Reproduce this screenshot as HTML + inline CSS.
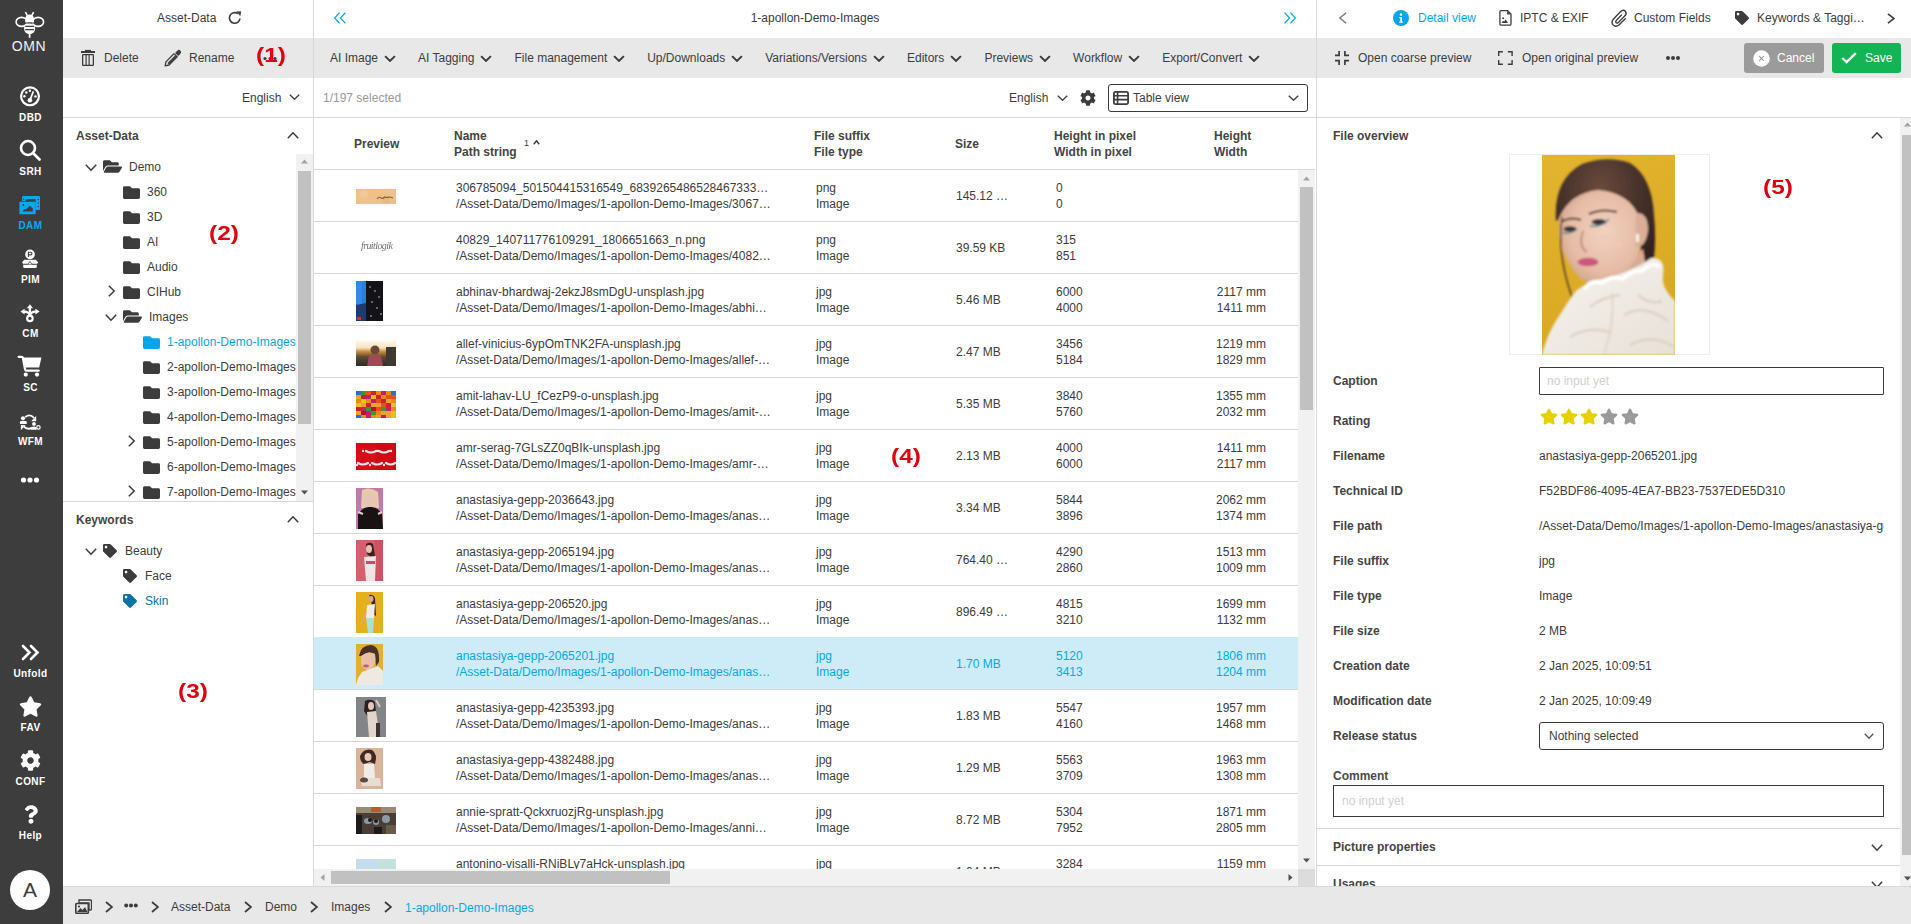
<!DOCTYPE html>
<html><head><meta charset="utf-8">
<style>
*{box-sizing:border-box;margin:0;padding:0}
html,body{width:1911px;height:924px;overflow:hidden;background:#fff;font-family:"Liberation Sans",sans-serif;font-size:12px;color:#3c3c3c}
.a{position:absolute}
.t{position:absolute;white-space:nowrap;line-height:16px}
.b{font-weight:bold;color:#444}
svg{display:block}
#nav{left:0;top:0;width:63px;height:924px;background:#3d3d3d}
.nl{position:absolute;left:0;width:61px;text-align:center;color:#fff;font-weight:bold;font-size:10px;line-height:13px;letter-spacing:0.4px}
.gray{background:#e8e8e8}
.hl{position:absolute;height:1px;background:#d8d8d8}
.vl{position:absolute;width:1px;background:#d8d8d8}
.red{color:#e0000e;font-weight:bold;font-size:20px;line-height:22px;transform:scaleX(1.22);transform-origin:0 0}
.blue{color:#06a7e8}
</style></head><body>
<!-- NAV -->
<div id="nav" class="a">
 <svg class="a" style="left:0;top:0" width="63" height="40" viewBox="0 0 63 40">
  <g fill="none" stroke="#fff" stroke-width="1.6">
   <ellipse cx="21.6" cy="21.9" rx="5.5" ry="4.5"/>
   <ellipse cx="38.1" cy="21.9" rx="5.5" ry="4.5"/>
   <path d="M25.4 12.2 L27.3 15.6 M33.6 12.2 L31.7 15.6"/>
  </g>
  <path d="M25.2 19.5 Q25.2 14.6 29.6 14.6 Q34 14.6 34 19.5 L34 22.6 L25.2 22.6z" fill="#fff"/>
  <ellipse cx="29.6" cy="28.6" rx="5.6" ry="5.6" fill="#fff"/>
  <path d="M24 23 H35.3" stroke="#3d3d3d" stroke-width="0.9"/>
  <path d="M25.2 26.4 H34 M25.2 29.6 H34" stroke="#3d3d3d" stroke-width="1.1"/>
  <path d="M29.6 33 V37.8" stroke="#fff" stroke-width="1.7"/>
 </svg>
 <div class="a" style="left:0;top:38px;width:58px;text-align:center;color:#f2f2f2;font-size:14px;line-height:16px;letter-spacing:0.6px">OMN</div>

 <svg class="a" style="left:19px;top:85px" width="23" height="23" viewBox="0 0 23 23">
  <circle cx="11" cy="11.3" r="8.95" fill="none" stroke="#fff" stroke-width="2.2"/>
  <circle cx="10.9" cy="15.2" r="2.3" fill="#fff"/>
  <path d="M10.9 15.2 L14.4 6.4" stroke="#fff" stroke-width="1.7"/>
  <circle cx="5.4" cy="11.3" r="1.2" fill="#fff"/><circle cx="7.3" cy="7.5" r="1.2" fill="#fff"/>
  <circle cx="10.9" cy="5.7" r="1.2" fill="#fff"/><circle cx="16.5" cy="11.4" r="1.2" fill="#fff"/>
 </svg>
 <div class="nl" style="top:111px">DBD</div>

 <svg class="a" style="left:19px;top:139px" width="23" height="23" viewBox="0 0 23 23">
  <circle cx="9" cy="9" r="7" fill="none" stroke="#fff" stroke-width="2.6"/>
  <path d="M14 14 L20.5 20.5" stroke="#fff" stroke-width="2.8" stroke-linecap="round"/>
 </svg>
 <div class="nl" style="top:165px">SRH</div>

 <svg class="a" style="left:0;top:190px" width="63" height="30" viewBox="0 190 63 30">
  <path d="M23.2 196 H38.8 A1.2 1.2 0 0 1 40 197.2 V208.8 A1.2 1.2 0 0 1 38.8 210 H35.6 V199.2 H25.5 V201 H22.1 V197.2 A1.2 1.2 0 0 1 23.2 196z" fill="#0aa9ee"/>
  <circle cx="23.7" cy="199.3" r="0.75" fill="#3d3d3d"/>
  <circle cx="38.3" cy="199.6" r="0.75" fill="#3d3d3d"/><circle cx="38.3" cy="203.1" r="0.75" fill="#3d3d3d"/><circle cx="38.3" cy="206.6" r="0.75" fill="#3d3d3d"/>
  <rect x="19.4" y="201.8" width="16.2" height="12.4" rx="0.6" fill="#0aa9ee"/>
  <path d="M22.4 211.5 L24.4 209.1 L25.4 209.8 L29.9 205.8 L32.8 208.5 V211.5z" fill="#3d3d3d"/>
  <circle cx="23.3" cy="205.1" r="1" fill="#3d3d3d"/>
 </svg>
 <div class="nl blue" style="top:219px;color:#0aa9ee">DAM</div>

 <svg class="a" style="left:0;top:245px" width="63" height="28" viewBox="0 245 63 28">
  <circle cx="30" cy="254.4" r="4.85" fill="#fff"/>
  <path d="M28.4 257 V252.2 H30.6 A1.35 1.35 0 0 1 30.6 254.9 H28.4" fill="none" stroke="#3d3d3d" stroke-width="1.1"/>
  <path d="M22 262.4 L24.2 259.8 H35.8 L38.2 262.4 L36.8 264 H23.4z" fill="#fff"/>
  <path d="M23.2 264.4 H36.8 V266.8 Q36.8 268.1 35.5 268.1 H24.5 Q23.2 268.1 23.2 266.8z" fill="#fff"/>
  <path d="M23.4 264.2 H28.2 L30 261.4 L31.8 264.2 H36.6" fill="none" stroke="#3d3d3d" stroke-width="0.8"/>
 </svg>
 <div class="nl" style="top:273px">PIM</div>

 <svg class="a" style="left:0;top:300px" width="63" height="26" viewBox="0 300 63 26">
  <circle cx="29.9" cy="318.4" r="2.75" fill="none" stroke="#fff" stroke-width="2.1"/>
  <path d="M29.9 315.6 V307.5" stroke="#fff" stroke-width="2.3"/>
  <path d="M29.9 315.6 Q29 311.6 24 311.6 M29.9 315.6 Q30.8 311.6 35.8 311.6" fill="none" stroke="#fff" stroke-width="2.2"/>
  <path d="M29.9 304.2 L33 308.2 H26.8z M20.4 311.6 L24.6 308.8 V314.4z M39.6 311.6 L35.4 308.8 V314.4z" fill="#fff"/>
 </svg>
 <div class="nl" style="top:327px">CM</div>

 <svg class="a" style="left:0;top:350px" width="63" height="30" viewBox="0 350 63 30">
  <path d="M18.6 356.8 H21.6 Q22.6 356.8 22.9 357.8 L25 369.2 Q25.3 370.6 26.6 370.6 H38.8" fill="none" stroke="#fff" stroke-width="2.2" stroke-linecap="round" stroke-linejoin="round"/>
  <path d="M23.2 357.6 H41.4 L39.2 367.4 H25z" fill="#fff"/>
  <circle cx="25.8" cy="374.6" r="2.1" fill="#fff"/><circle cx="37" cy="374.6" r="2.1" fill="#fff"/>
 </svg>
 <div class="nl" style="top:381px">SC</div>

 <svg class="a" style="left:0;top:409.5px" width="63" height="24" viewBox="0 408 63 24">
  <circle cx="23" cy="416.3" r="2.1" fill="#fff"/>
  <rect x="19.9" y="418.9" width="6.9" height="3.2" rx="1.2" fill="#fff"/>
  <path d="M25.3 415 Q30 411.4 34 415.8" fill="none" stroke="#fff" stroke-width="1.9"/>
  <path d="M36.2 413.8 V419.3 H31.2z" fill="#fff"/>
  <path d="M23.2 423.8 Q27.5 428.6 32 425.6" fill="none" stroke="#fff" stroke-width="1.9"/>
  <path d="M20.9 422.9 V427.9 L25.6 423.2z" fill="#fff"/>
  <circle cx="34" cy="421.9" r="1.9" fill="#fff"/>
  <path d="M30.9 427.8 Q30.9 424.4 33.8 424.4 Q36.7 424.4 36.7 427.8z" fill="#fff"/>
  <circle cx="38.4" cy="425.4" r="1.75" fill="none" stroke="#fff" stroke-width="1.2"/>
 </svg>
 <div class="nl" style="top:435px">WFM</div>

 <svg class="a" style="left:20px;top:476px" width="20" height="8" viewBox="0 0 20 8">
  <circle cx="3.5" cy="4" r="2.6" fill="#fff"/><circle cx="10" cy="4" r="2.6" fill="#fff"/><circle cx="16.5" cy="4" r="2.6" fill="#fff"/>
 </svg>

 <svg class="a" style="left:21px;top:644px" width="19" height="17" viewBox="0 0 19 17">
  <path d="M2 2 L8.5 8.5 L2 15 M10 2 L16.5 8.5 L10 15" stroke="#fff" stroke-width="2.6" fill="none" stroke-linecap="round"/>
 </svg>
 <div class="nl" style="top:667px">Unfold</div>

 <svg class="a" style="left:19px;top:696px" width="23" height="21" viewBox="0 0 576 512">
  <path fill="#fff" d="M259.3 17.8L194 150.2 47.9 171.5c-26.2 3.8-36.7 36.1-17.7 54.6l105.7 103-25 145.5c-4.5 26.3 23.2 46 46.4 33.7L288 439.6l130.7 68.7c23.2 12.2 50.9-7.4 46.4-33.7l-25-145.5 105.7-103c19-18.5 8.5-50.8-17.7-54.6L382 150.2 316.7 17.8c-11.7-23.6-45.6-23.9-57.4 0z"/>
 </svg>
 <div class="nl" style="top:721px">FAV</div>

 <svg class="a" style="left:20px;top:750px" width="21" height="21" viewBox="0 0 512 512">
  <path fill="#fff" d="M487.4 315.7l-42.6-24.6c4.3-23.2 4.3-47 0-70.2l42.6-24.6c4.9-2.8 7.100-8.6 5.5-14-11.1-35.6-30-67.8-54.7-94.6-3.8-4.1-10-5.1-14.8-2.3L380.8 110c-17.9-15.4-38.5-27.3-60.8-35.1V25.8c0-5.6-3.9-10.5-9.4-11.7-36.7-8.2-74.3-7.8-109.2 0-5.5 1.2-9.4 6.1-9.4 11.7V75c-22.2 7.9-42.8 19.8-60.8 35.1L88.7 85.5c-4.9-2.8-11-1.9-14.8 2.3-24.7 26.7-43.6 58.9-54.7 94.6-1.7 5.4.6 11.2 5.5 14L67.3 221c-4.3 23.2-4.3 47 0 70.2l-42.6 24.6c-4.9 2.8-7.100 8.6-5.5 14 11.1 35.6 30 67.8 54.7 94.6 3.8 4.1 10 5.1 14.8 2.3l42.6-24.6c17.9 15.4 38.5 27.3 60.8 35.1v49.2c0 5.6 3.9 10.5 9.4 11.700 36.7 8.2 74.3 7.8 109.2 0 5.5-1.2 9.4-6.1 9.4-11.7v-49.2c22.2-7.9 42.8-19.8 60.8-35.1l42.6 24.6c4.9 2.8 11 1.9 14.8-2.3 24.7-26.7 43.6-58.9 54.7-94.6 1.5-5.5-.7-11.3-5.6-14.1zM256 336c-44.1 0-80-35.9-80-80s35.9-80 80-80 80 35.9 80 80-35.9 80-80 80z"/>
 </svg>
 <div class="nl" style="top:775px">CONF</div>

 <svg class="a" style="left:24px;top:805px" width="14" height="19" viewBox="0 0 384 512">
  <path fill="#fff" d="M202.021 0C122.202 0 70.503 32.703 29.914 91.026c-7.363 10.58-5.093 25.086 5.178 32.874l43.138 32.709c10.373 7.865 25.132 6.026 33.253-4.148 25.049-31.381 43.63-49.449 82.757-49.449 30.764 0 68.816 19.799 68.816 49.631 0 22.552-18.617 34.134-48.993 51.164-35.423 19.86-82.299 44.576-82.299 106.405V320c0 13.255 10.745 24 24 24h72.471c13.255 0 24-10.745 24-24v-5.773c0-42.86 125.268-44.645 125.268-160.627C377.504 66.256 286.902 0 202.021 0zM192 373.459c-38.196 0-69.271 31.075-69.271 69.271 0 38.195 31.075 69.27 69.271 69.27s69.271-31.075 69.271-69.271-31.075-69.27-69.271-69.27z"/>
 </svg>
 <div class="nl" style="top:829px">Help</div>

 <div class="a" style="left:10px;top:870px;width:40px;height:40px;border-radius:50%;background:#fff;color:#3c3c3c;text-align:center;font-size:21px;line-height:40px">A</div>
</div>
<!-- PANEL 1 -->
<div id="p1" class="a" style="left:63px;top:0;width:250px;height:886px">
<div class="t" style="left:94px;top:10px">Asset-Data</div>
<svg class="a" style="left:164px;top:10px" width="16" height="16" viewBox="0 0 16 16"><path d="M13 8.5 A5.3 5.3 0 1 1 10.8 3.6" fill="none" stroke="#3c3c3c" stroke-width="1.6"/><path d="M9.3 1.2 L14.2 1.5 L13.3 6.2z" fill="#3c3c3c"/></svg>
<div class="a gray" style="left:0;top:38px;width:250px;height:40px"></div>
<svg class="a" style="left:18px;top:49px" width="14" height="17" viewBox="0 0 14 17"><rect x="4" y="0.9" width="6" height="1.3" fill="#3c3c3c"/><rect x="0" y="2" width="14" height="2" fill="#3c3c3c"/><rect x="1.65" y="5.65" width="10.7" height="10.7" rx="0.6" fill="none" stroke="#3c3c3c" stroke-width="1.3"/><rect x="4.5" y="6" width="1.2" height="10" fill="#3c3c3c"/><rect x="7.5" y="6" width="1.2" height="10" fill="#3c3c3c"/></svg>
<div class="t" style="left:41px;top:50px">Delete</div>
<svg class="a" style="left:99px;top:47px" width="22" height="22" viewBox="0 0 22 22"><path d="M12.0 6.6 L15.2 9.8 L7.0 18.0 L3.2 18.9 L3.9 14.9 Z" fill="none" stroke="#3c3c3c" stroke-width="1.3" stroke-linejoin="round"/><path d="M14.2 8.8 L6.2 16.8" stroke="#3c3c3c" stroke-width="2"/><path d="M15.2 6.9 L16.9 5.2" stroke="#3c3c3c" stroke-width="4.4" stroke-linecap="round"/><path d="M12.6 5.9 L15.9 9.2" stroke="#e8e8e8" stroke-width="0.9"/></svg>
<div class="t" style="left:126px;top:50px">Rename</div>
<svg class="a" style="left:200px;top:56px" width="14" height="5" viewBox="0 0 14 5"><circle cx="2" cy="2.5" r="1.6" fill="#3c3c3c"/><circle cx="7" cy="2.5" r="1.6" fill="#3c3c3c"/><circle cx="12" cy="2.5" r="1.6" fill="#3c3c3c"/></svg>
<div class="a red" style="left:193px;top:43.5px">(1)</div>
<div class="t" style="left:179px;top:90px">English</div>
<svg class="a" style="left:226px;top:94px" width="11" height="6" viewBox="0 0 11 6"><path d="M0.8 0.8 L5.5 5.2 L10.2 0.8" fill="none" stroke="#3c3c3c" stroke-width="1.3"/></svg>
<div class="hl" style="left:0;top:117px;width:250px"></div>
<div class="t b" style="left:13px;top:128px">Asset-Data</div>
<svg class="a" style="left:224px;top:132px" width="12" height="7" viewBox="0 0 12 7"><path d="M0.8 6.2 L6.0 0.8 L11.2 6.2" fill="none" stroke="#3c3c3c" stroke-width="1.5"/></svg>
<div class="a" style="left:0;top:154px;width:233px;height:347px;overflow:hidden"><svg class="a" style="left:22px;top:10px" width="12" height="7" viewBox="0 0 12 7"><path d="M0.8 0.8 L6.0 6.2 L11.2 0.8" fill="none" stroke="#3c3c3c" stroke-width="1.5"/></svg><svg class="a" style="left:40px;top:5px" width="19" height="15" viewBox="0 56 576 400" fill="#3c3c3c"><path d="M572.694 292.093L500.27 416.248A63.997 63.997 0 0 1 444.989 448H45.025c-18.523 0-30.064-20.093-20.731-36.093l72.424-124.155A64 64 0 0 1 152 256h399.964c18.523 0 30.064 20.093 20.73 36.093zM152 224h328v-48c0-26.51-21.49-48-48-48H272l-64-64H48C21.49 64 0 85.49 0 112v278.046l69.077-118.418C86.214 242.25 117.989 224 152 224z"/></svg><div class="t" style="left:66px;top:5px">Demo</div><svg class="a" style="left:60px;top:31px" width="17" height="15" viewBox="0 48 512 416" fill="#3c3c3c"><path d="M464 128H272l-64-64H48C21.49 64 0 85.49 0 112v288c0 26.51 21.49 48 48 48h416c26.51 0 48-21.49 48-48V176c0-26.51-21.49-48-48-48z"/></svg><div class="t" style="left:84px;top:30px">360</div><svg class="a" style="left:60px;top:56px" width="17" height="15" viewBox="0 48 512 416" fill="#3c3c3c"><path d="M464 128H272l-64-64H48C21.49 64 0 85.49 0 112v288c0 26.51 21.49 48 48 48h416c26.51 0 48-21.49 48-48V176c0-26.51-21.49-48-48-48z"/></svg><div class="t" style="left:84px;top:55px">3D</div><svg class="a" style="left:60px;top:81px" width="17" height="15" viewBox="0 48 512 416" fill="#3c3c3c"><path d="M464 128H272l-64-64H48C21.49 64 0 85.49 0 112v288c0 26.51 21.49 48 48 48h416c26.51 0 48-21.49 48-48V176c0-26.51-21.49-48-48-48z"/></svg><div class="t" style="left:84px;top:80px">AI</div><svg class="a" style="left:60px;top:106px" width="17" height="15" viewBox="0 48 512 416" fill="#3c3c3c"><path d="M464 128H272l-64-64H48C21.49 64 0 85.49 0 112v288c0 26.51 21.49 48 48 48h416c26.51 0 48-21.49 48-48V176c0-26.51-21.49-48-48-48z"/></svg><div class="t" style="left:84px;top:105px">Audio</div><svg class="a" style="left:45px;top:131px" width="7" height="12" viewBox="0 0 7 12"><path d="M0.8 0.8 L6.2 6.0 L0.8 11.2" fill="none" stroke="#3c3c3c" stroke-width="1.5"/></svg><svg class="a" style="left:60px;top:131px" width="17" height="15" viewBox="0 48 512 416" fill="#3c3c3c"><path d="M464 128H272l-64-64H48C21.49 64 0 85.49 0 112v288c0 26.51 21.49 48 48 48h416c26.51 0 48-21.49 48-48V176c0-26.51-21.49-48-48-48z"/></svg><div class="t" style="left:84px;top:130px">CIHub</div><svg class="a" style="left:42px;top:160px" width="12" height="7" viewBox="0 0 12 7"><path d="M0.8 0.8 L6.0 6.2 L11.2 0.8" fill="none" stroke="#3c3c3c" stroke-width="1.5"/></svg><svg class="a" style="left:60px;top:155px" width="19" height="15" viewBox="0 56 576 400" fill="#3c3c3c"><path d="M572.694 292.093L500.27 416.248A63.997 63.997 0 0 1 444.989 448H45.025c-18.523 0-30.064-20.093-20.731-36.093l72.424-124.155A64 64 0 0 1 152 256h399.964c18.523 0 30.064 20.093 20.73 36.093zM152 224h328v-48c0-26.51-21.49-48-48-48H272l-64-64H48C21.49 64 0 85.49 0 112v278.046l69.077-118.418C86.214 242.25 117.989 224 152 224z"/></svg><div class="t" style="left:86px;top:155px">Images</div><svg class="a" style="left:80px;top:181px" width="17" height="15" viewBox="0 48 512 416" fill="#06a7e8"><path d="M464 128H272l-64-64H48C21.49 64 0 85.49 0 112v288c0 26.51 21.49 48 48 48h416c26.51 0 48-21.49 48-48V176c0-26.51-21.49-48-48-48z"/></svg><div class="t" style="left:104px;top:180px;color:#06a7e8">1-apollon-Demo-Images</div><svg class="a" style="left:80px;top:206px" width="17" height="15" viewBox="0 48 512 416" fill="#3c3c3c"><path d="M464 128H272l-64-64H48C21.49 64 0 85.49 0 112v288c0 26.51 21.49 48 48 48h416c26.51 0 48-21.49 48-48V176c0-26.51-21.49-48-48-48z"/></svg><div class="t" style="left:104px;top:205px">2-apollon-Demo-Images</div><svg class="a" style="left:80px;top:231px" width="17" height="15" viewBox="0 48 512 416" fill="#3c3c3c"><path d="M464 128H272l-64-64H48C21.49 64 0 85.49 0 112v288c0 26.51 21.49 48 48 48h416c26.51 0 48-21.49 48-48V176c0-26.51-21.49-48-48-48z"/></svg><div class="t" style="left:104px;top:230px">3-apollon-Demo-Images</div><svg class="a" style="left:80px;top:256px" width="17" height="15" viewBox="0 48 512 416" fill="#3c3c3c"><path d="M464 128H272l-64-64H48C21.49 64 0 85.49 0 112v288c0 26.51 21.49 48 48 48h416c26.51 0 48-21.49 48-48V176c0-26.51-21.49-48-48-48z"/></svg><div class="t" style="left:104px;top:255px">4-apollon-Demo-Images</div><svg class="a" style="left:65px;top:281px" width="7" height="12" viewBox="0 0 7 12"><path d="M0.8 0.8 L6.2 6.0 L0.8 11.2" fill="none" stroke="#3c3c3c" stroke-width="1.5"/></svg><svg class="a" style="left:80px;top:281px" width="17" height="15" viewBox="0 48 512 416" fill="#3c3c3c"><path d="M464 128H272l-64-64H48C21.49 64 0 85.49 0 112v288c0 26.51 21.49 48 48 48h416c26.51 0 48-21.49 48-48V176c0-26.51-21.49-48-48-48z"/></svg><div class="t" style="left:104px;top:280px">5-apollon-Demo-Images</div><svg class="a" style="left:80px;top:306px" width="17" height="15" viewBox="0 48 512 416" fill="#3c3c3c"><path d="M464 128H272l-64-64H48C21.49 64 0 85.49 0 112v288c0 26.51 21.49 48 48 48h416c26.51 0 48-21.49 48-48V176c0-26.51-21.49-48-48-48z"/></svg><div class="t" style="left:104px;top:305px">6-apollon-Demo-Images</div><svg class="a" style="left:65px;top:331px" width="7" height="12" viewBox="0 0 7 12"><path d="M0.8 0.8 L6.2 6.0 L0.8 11.2" fill="none" stroke="#3c3c3c" stroke-width="1.5"/></svg><svg class="a" style="left:80px;top:331px" width="17" height="15" viewBox="0 48 512 416" fill="#3c3c3c"><path d="M464 128H272l-64-64H48C21.49 64 0 85.49 0 112v288c0 26.51 21.49 48 48 48h416c26.51 0 48-21.49 48-48V176c0-26.51-21.49-48-48-48z"/></svg><div class="t" style="left:104px;top:330px">7-apollon-Demo-Images</div></div>
<div class="a" style="left:233px;top:154px;width:17px;height:347px;background:#f1f1f1"></div>
<div class="a" style="left:235px;top:171px;width:13px;height:253px;background:#c1c1c1"></div>
<svg class="a" style="left:238px;top:159px" width="7" height="5" viewBox="0 0 7 5"><path d="M0 4.5 L3.5 0.5 L7 4.5z" fill="#a3a3a3"/></svg>
<svg class="a" style="left:238px;top:490px" width="7" height="5" viewBox="0 0 7 5"><path d="M0 0.5 L3.5 4.5 L7 0.5z" fill="#505050"/></svg>
<div class="hl" style="left:0;top:501px;width:250px"></div>
<div class="a red" style="left:146px;top:222px">(2)</div>
<div class="t b" style="left:13px;top:512px">Keywords</div>
<svg class="a" style="left:224px;top:516px" width="12" height="7" viewBox="0 0 12 7"><path d="M0.8 6.2 L6.0 0.8 L11.2 6.2" fill="none" stroke="#3c3c3c" stroke-width="1.5"/></svg>
<svg class="a" style="left:22px;top:548px" width="12" height="7" viewBox="0 0 12 7"><path d="M0.8 0.8 L6.0 6.2 L11.2 0.8" fill="none" stroke="#3c3c3c" stroke-width="1.5"/></svg>
<svg class="a" style="left:40px;top:544px" width="14" height="14" viewBox="0 0 512 512" fill="#3c3c3c"><path d="M0 252.118V48C0 21.49 21.49 0 48 0h204.118a48 48 0 0 1 33.941 14.059l211.882 211.882c18.745 18.745 18.745 49.137 0 67.882L293.823 497.941c-18.745 18.745-49.137 18.745-67.882 0L14.059 286.059A48 48 0 0 1 0 252.118zM112 64c-26.51 0-48 21.49-48 48s21.49 48 48 48 48-21.49 48-48-21.49-48-48-48z"/></svg>
<div class="t" style="left:62px;top:543px">Beauty</div>
<svg class="a" style="left:60px;top:569px" width="14" height="14" viewBox="0 0 512 512" fill="#3c3c3c"><path d="M0 252.118V48C0 21.49 21.49 0 48 0h204.118a48 48 0 0 1 33.941 14.059l211.882 211.882c18.745 18.745 18.745 49.137 0 67.882L293.823 497.941c-18.745 18.745-49.137 18.745-67.882 0L14.059 286.059A48 48 0 0 1 0 252.118zM112 64c-26.51 0-48 21.49-48 48s21.49 48 48 48 48-21.49 48-48-21.49-48-48-48z"/></svg>
<div class="t" style="left:82px;top:568px">Face</div>
<svg class="a" style="left:60px;top:594px" width="14" height="14" viewBox="0 0 512 512" fill="#0a72a6"><path d="M0 252.118V48C0 21.49 21.49 0 48 0h204.118a48 48 0 0 1 33.941 14.059l211.882 211.882c18.745 18.745 18.745 49.137 0 67.882L293.823 497.941c-18.745 18.745-49.137 18.745-67.882 0L14.059 286.059A48 48 0 0 1 0 252.118zM112 64c-26.51 0-48 21.49-48 48s21.49 48 48 48 48-21.49 48-48-21.49-48-48-48z"/></svg>
<div class="t" style="left:82px;top:593px;color:#0a72a6">Skin</div>
<div class="a red" style="left:115px;top:680px">(3)</div>
</div>
<div class="vl" style="left:313px;top:0;height:886px"></div>
<!-- PANEL 2 -->
<div id="p2" class="a" style="left:314px;top:0;width:1002px;height:886px">
<svg class="a" style="left:20px;top:12px" width="12" height="12" viewBox="0 0 12 12"><path d="M5.6 0.6 L0.6 6 L5.6 11.4 M11.4 0.6 L6.4 6 L11.4 11.4" fill="none" stroke="#06a7e8" stroke-width="1.3"/></svg>
<div class="t" style="left:0;width:1002px;text-align:center;top:10px">1-apollon-Demo-Images</div>
<svg class="a" style="left:970px;top:12px" width="12" height="12" viewBox="0 0 12 12"><path d="M0.6 0.6 L5.6 6 L0.6 11.4 M6.4 0.6 L11.4 6 L6.4 11.4" fill="none" stroke="#06a7e8" stroke-width="1.3"/></svg>
<div class="a gray" style="left:0;top:38px;width:1002px;height:40px"></div>
<div class="t" style="left:16.0px;top:50px">AI Image</div>
<svg class="a" style="left:70px;top:55px" width="12" height="7" viewBox="0 0 12 7"><path d="M1.1 1.1 L6.0 5.9 L10.9 1.1" fill="none" stroke="#3c3c3c" stroke-width="2"/></svg>
<div class="t" style="left:104.0px;top:50px">AI Tagging</div>
<svg class="a" style="left:166px;top:55px" width="12" height="7" viewBox="0 0 12 7"><path d="M1.1 1.1 L6.0 5.9 L10.9 1.1" fill="none" stroke="#3c3c3c" stroke-width="2"/></svg>
<div class="t" style="left:200.5px;top:50px">File management</div>
<svg class="a" style="left:299px;top:55px" width="12" height="7" viewBox="0 0 12 7"><path d="M1.1 1.1 L6.0 5.9 L10.9 1.1" fill="none" stroke="#3c3c3c" stroke-width="2"/></svg>
<div class="t" style="left:333.2px;top:50px">Up/Downloads</div>
<svg class="a" style="left:417px;top:55px" width="12" height="7" viewBox="0 0 12 7"><path d="M1.1 1.1 L6.0 5.9 L10.9 1.1" fill="none" stroke="#3c3c3c" stroke-width="2"/></svg>
<div class="t" style="left:451.2px;top:50px">Variations/Versions</div>
<svg class="a" style="left:559px;top:55px" width="12" height="7" viewBox="0 0 12 7"><path d="M1.1 1.1 L6.0 5.9 L10.9 1.1" fill="none" stroke="#3c3c3c" stroke-width="2"/></svg>
<div class="t" style="left:593.0px;top:50px">Editors</div>
<svg class="a" style="left:636px;top:55px" width="12" height="7" viewBox="0 0 12 7"><path d="M1.1 1.1 L6.0 5.9 L10.9 1.1" fill="none" stroke="#3c3c3c" stroke-width="2"/></svg>
<div class="t" style="left:670.4px;top:50px">Previews</div>
<svg class="a" style="left:725px;top:55px" width="12" height="7" viewBox="0 0 12 7"><path d="M1.1 1.1 L6.0 5.9 L10.9 1.1" fill="none" stroke="#3c3c3c" stroke-width="2"/></svg>
<div class="t" style="left:759.1px;top:50px">Workflow</div>
<svg class="a" style="left:814px;top:55px" width="12" height="7" viewBox="0 0 12 7"><path d="M1.1 1.1 L6.0 5.9 L10.9 1.1" fill="none" stroke="#3c3c3c" stroke-width="2"/></svg>
<div class="t" style="left:848.2px;top:50px">Export/Convert</div>
<svg class="a" style="left:934px;top:55px" width="12" height="7" viewBox="0 0 12 7"><path d="M1.1 1.1 L6.0 5.9 L10.9 1.1" fill="none" stroke="#3c3c3c" stroke-width="2"/></svg>
<div class="t" style="left:9px;top:90px;color:#999">1/197 selected</div>
<div class="t" style="left:695px;top:90px">English</div>
<svg class="a" style="left:743px;top:95px" width="11" height="6" viewBox="0 0 11 6"><path d="M0.75 0.75 L5.5 5.25 L10.25 0.75" fill="none" stroke="#3c3c3c" stroke-width="1.3"/></svg>
<svg class="a" style="left:766px;top:90px" width="16" height="16" viewBox="0 0 512 512" fill="#3c3c3c"><path d="M487.4 315.7l-42.6-24.6c4.3-23.2 4.3-47 0-70.2l42.6-24.6c4.9-2.8 7.1-8.6 5.5-14-11.1-35.6-30-67.8-54.7-94.6-3.8-4.1-10-5.1-14.8-2.3L380.8 110c-17.9-15.4-38.5-27.3-60.8-35.1V25.8c0-5.6-3.9-10.5-9.4-11.7-36.7-8.2-74.3-7.8-109.2 0-5.5 1.2-9.4 6.1-9.4 11.7V75c-22.2 7.9-42.8 19.8-60.8 35.1L88.7 85.5c-4.9-2.8-11-1.9-14.8 2.3-24.7 26.7-43.6 58.9-54.7 94.6-1.7 5.4.6 11.2 5.5 14L67.3 221c-4.3 23.2-4.3 47 0 70.2l-42.6 24.6c-4.9 2.8-7.1 8.6-5.5 14 11.1 35.6 30 67.8 54.7 94.6 3.8 4.1 10 5.1 14.8 2.3l42.6-24.6c17.9 15.4 38.5 27.3 60.8 35.1v49.2c0 5.6 3.9 10.5 9.4 11.7 36.7 8.2 74.3 7.8 109.2 0 5.5-1.2 9.4-6.1 9.4-11.7v-49.2c22.2-7.9 42.8-19.8 60.8-35.1l42.6 24.6c4.9 2.8 11 1.9 14.8-2.3 24.7-26.7 43.6-58.9 54.7-94.6 1.5-5.5-.7-11.3-5.6-14.1zM256 336c-44.1 0-80-35.9-80-80s35.9-80 80-80 80 35.9 80 80-35.9 80-80 80z"/></svg>
<div class="a" style="left:794px;top:84px;width:200px;height:28px;border:1.5px solid #3c3c3c;border-radius:3px"></div>
<svg class="a" style="left:799px;top:91px" width="16" height="14" viewBox="0 0 16 14"><rect x="0.9" y="0.9" width="14.2" height="12.2" rx="1.5" fill="none" stroke="#3c3c3c" stroke-width="1.8"/><path d="M1 4.7H15M1 8.6H15M4.6 1V13" stroke="#3c3c3c" stroke-width="1.6"/></svg>
<div class="t" style="left:819px;top:90px">Table view</div>
<svg class="a" style="left:974px;top:95px" width="11" height="6" viewBox="0 0 11 6"><path d="M0.75 0.75 L5.5 5.25 L10.25 0.75" fill="none" stroke="#3c3c3c" stroke-width="1.3"/></svg>
<div class="hl" style="left:0;top:117px;width:1002px"></div>
<div class="t b" style="left:40px;top:136px">Preview</div>
<div class="t b" style="left:140px;top:128px">Name<br>Path string</div>
<div class="t b" style="left:500px;top:128px">File suffix<br>File type</div>
<div class="t b" style="left:641px;top:136px">Size</div>
<div class="t b" style="left:740px;top:128px">Height in pixel<br>Width in pixel</div>
<div class="t b" style="left:900px;top:128px">Height<br>Width</div>
<div class="a" style="left:210px;top:138px;font-size:9px;line-height:10px">1</div>
<svg class="a" style="left:219px;top:140px" width="7" height="5" viewBox="0 0 7 5"><path d="M0.7999999999999999 4.2 L3.5 0.7999999999999999 L6.2 4.2" fill="none" stroke="#3c3c3c" stroke-width="1.4"/></svg>
<div class="hl" style="left:0;top:169px;width:1001px"></div>
<div class="a" style="left:0;top:170px;width:984px;height:699px;overflow:hidden"><svg class="a" style="left:42px;top:19.0px" width="40" height="15" viewBox="0 0 40 15"><rect width="40" height="15" fill="#efc088"/><circle cx="8" cy="5" r="4" fill="#f4cc9c" opacity="0.7"/><circle cx="30" cy="11" r="4" fill="#e8b47a" opacity="0.6"/><path d="M21 10 q2 -3 4 -1 q2 1 4 -1 q2 1 4 0 q2 0 4 1" stroke="#6a4a30" stroke-width="1.1" fill="none" opacity="0.8"/></svg>
<div class="t" style="left:142px;top:10px;">306785094_501504415316549_6839265486528467333…<br>/Asset-Data/Demo/Images/1-apollon-Demo-Images/3067…</div>
<div class="t" style="left:502px;top:10px;">png<br>Image</div>
<div class="t" style="left:642px;top:18px;">145.12 …</div>
<div class="t" style="left:742px;top:10px;">0<br>0</div>
<div class="hl" style="left:0;top:51px;width:984px"></div>
<svg class="a" style="left:42px;top:73.5px" width="36" height="10" viewBox="0 0 36 10"></svg>
<div class="a" style="left:47px;top:70px;font-family:'Liberation Serif',serif;font-style:italic;font-size:10px;line-height:12px;color:#555;letter-spacing:-0.6px;opacity:0.85">fruitlogik</div>
<div class="t" style="left:142px;top:62px;">40829_140711776109291_1806651663_n.png<br>/Asset-Data/Demo/Images/1-apollon-Demo-Images/4082…</div>
<div class="t" style="left:502px;top:62px;">png<br>Image</div>
<div class="t" style="left:642px;top:70px;">39.59 KB</div>
<div class="t" style="left:742px;top:62px;">315<br>851</div>
<div class="hl" style="left:0;top:103px;width:984px"></div>
<svg class="a" style="left:42px;top:110.5px" width="27" height="40" viewBox="0 0 27 40"><rect width="27" height="40" fill="#141418"/><rect width="10" height="40" fill="#2a7ee0"/><rect x="0" y="0" width="6" height="40" fill="#3a90f0" opacity="0.6"/><path d="M0 24 L10 22 L10 40 L0 40z" fill="#203a70"/><g fill="#8a8a8a" opacity="0.7"><rect x="13" y="5" width="2" height="2"/><rect x="18" y="9" width="2" height="2"/><rect x="22" y="15" width="2" height="2"/><rect x="15" y="20" width="2" height="2"/><rect x="20" y="26" width="2" height="2"/><rect x="24" y="32" width="2" height="2"/><rect x="14" y="34" width="2" height="2"/></g><rect x="1" y="36" width="4" height="3" fill="#c04020"/></svg>
<div class="t" style="left:142px;top:114px;">abhinav-bhardwaj-2ekzJ8smDgU-unsplash.jpg<br>/Asset-Data/Demo/Images/1-apollon-Demo-Images/abhi…</div>
<div class="t" style="left:502px;top:114px;">jpg<br>Image</div>
<div class="t" style="left:642px;top:122px;">5.46 MB</div>
<div class="t" style="left:742px;top:114px;">6000<br>4000</div>
<div class="t" style="left:852px;width:100px;text-align:right;top:114px;">2117 mm<br>1411 mm</div>
<div class="hl" style="left:0;top:155px;width:984px"></div>
<svg class="a" style="left:42px;top:169.5px" width="40" height="26" viewBox="0 0 40 26"><defs><linearGradient id="al" x1="0" y1="0" x2="0" y2="1"><stop offset="0" stop-color="#fffaf2"/><stop offset="0.3" stop-color="#f6e2c0"/><stop offset="0.45" stop-color="#c98a3a"/><stop offset="0.65" stop-color="#5a4a38"/><stop offset="1" stop-color="#2e2a24"/></linearGradient></defs><rect width="40" height="26" fill="url(#al)"/><rect x="30" y="7" width="10" height="19" fill="#3e3a30"/><circle cx="19" cy="10" r="4.5" fill="#6a4a30"/><path d="M11 26 L13 16 Q19 13 25 16 L27 26z" fill="#a04a58"/></svg>
<div class="t" style="left:142px;top:166px;">allef-vinicius-6ypOmTNK2FA-unsplash.jpg<br>/Asset-Data/Demo/Images/1-apollon-Demo-Images/allef-…</div>
<div class="t" style="left:502px;top:166px;">jpg<br>Image</div>
<div class="t" style="left:642px;top:174px;">2.47 MB</div>
<div class="t" style="left:742px;top:166px;">3456<br>5184</div>
<div class="t" style="left:852px;width:100px;text-align:right;top:166px;">1219 mm<br>1829 mm</div>
<div class="hl" style="left:0;top:207px;width:984px"></div>
<svg class="a" style="left:42px;top:221.0px" width="40" height="27" viewBox="0 0 40 27"><rect x="0" y="0" width="5.5" height="4.5" fill="#2a70c0"/><rect x="5" y="0" width="5.5" height="4.5" fill="#3a9a30"/><rect x="10" y="0" width="5.5" height="4.5" fill="#e85018"/><rect x="15" y="0" width="5.5" height="4.5" fill="#d0202a"/><rect x="20" y="0" width="5.5" height="4.5" fill="#e88a1a"/><rect x="25" y="0" width="5.5" height="4.5" fill="#c02070"/><rect x="30" y="0" width="5.5" height="4.5" fill="#e88a1a"/><rect x="35" y="0" width="5.5" height="4.5" fill="#2a70c0"/><rect x="0" y="4" width="5.5" height="4.5" fill="#f0a030"/><rect x="5" y="4" width="5.5" height="4.5" fill="#d0202a"/><rect x="10" y="4" width="5.5" height="4.5" fill="#c02070"/><rect x="15" y="4" width="5.5" height="4.5" fill="#e8c020"/><rect x="20" y="4" width="5.5" height="4.5" fill="#d0202a"/><rect x="25" y="4" width="5.5" height="4.5" fill="#e88a1a"/><rect x="30" y="4" width="5.5" height="4.5" fill="#e85018"/><rect x="35" y="4" width="5.5" height="4.5" fill="#e85018"/><rect x="0" y="8" width="5.5" height="4.5" fill="#e88a1a"/><rect x="5" y="8" width="5.5" height="4.5" fill="#e8c020"/><rect x="10" y="8" width="5.5" height="4.5" fill="#e88a1a"/><rect x="15" y="8" width="5.5" height="4.5" fill="#c02070"/><rect x="20" y="8" width="5.5" height="4.5" fill="#e85018"/><rect x="25" y="8" width="5.5" height="4.5" fill="#d0202a"/><rect x="30" y="8" width="5.5" height="4.5" fill="#f0a030"/><rect x="35" y="8" width="5.5" height="4.5" fill="#e88a1a"/><rect x="0" y="12" width="5.5" height="4.5" fill="#e8c020"/><rect x="5" y="12" width="5.5" height="4.5" fill="#f0a030"/><rect x="10" y="12" width="5.5" height="4.5" fill="#d0202a"/><rect x="15" y="12" width="5.5" height="4.5" fill="#f0a030"/><rect x="20" y="12" width="5.5" height="4.5" fill="#f0a030"/><rect x="25" y="12" width="5.5" height="4.5" fill="#e85018"/><rect x="30" y="12" width="5.5" height="4.5" fill="#d0202a"/><rect x="35" y="12" width="5.5" height="4.5" fill="#e8c020"/><rect x="0" y="16" width="5.5" height="4.5" fill="#d0202a"/><rect x="5" y="16" width="5.5" height="4.5" fill="#c02070"/><rect x="10" y="16" width="5.5" height="4.5" fill="#3a9a30"/><rect x="15" y="16" width="5.5" height="4.5" fill="#b01828"/><rect x="20" y="16" width="5.5" height="4.5" fill="#e85018"/><rect x="25" y="16" width="5.5" height="4.5" fill="#3a9a30"/><rect x="30" y="16" width="5.5" height="4.5" fill="#c02070"/><rect x="35" y="16" width="5.5" height="4.5" fill="#e88a1a"/><rect x="0" y="20" width="5.5" height="4.5" fill="#f0a030"/><rect x="5" y="20" width="5.5" height="4.5" fill="#b01828"/><rect x="10" y="20" width="5.5" height="4.5" fill="#c02070"/><rect x="15" y="20" width="5.5" height="4.5" fill="#3a9a30"/><rect x="20" y="20" width="5.5" height="4.5" fill="#e88a1a"/><rect x="25" y="20" width="5.5" height="4.5" fill="#f0a030"/><rect x="30" y="20" width="5.5" height="4.5" fill="#f0a030"/><rect x="35" y="20" width="5.5" height="4.5" fill="#e8c020"/><rect x="0" y="24" width="5.5" height="4.5" fill="#2a70c0"/><rect x="5" y="24" width="5.5" height="4.5" fill="#e88a1a"/><rect x="10" y="24" width="5.5" height="4.5" fill="#c02070"/><rect x="15" y="24" width="5.5" height="4.5" fill="#e88a1a"/><rect x="20" y="24" width="5.5" height="4.5" fill="#f0a030"/><rect x="25" y="24" width="5.5" height="4.5" fill="#d0202a"/><rect x="30" y="24" width="5.5" height="4.5" fill="#f0a030"/><rect x="35" y="24" width="5.5" height="4.5" fill="#e8c020"/></svg>
<div class="t" style="left:142px;top:218px;">amit-lahav-LU_fCezP9-o-unsplash.jpg<br>/Asset-Data/Demo/Images/1-apollon-Demo-Images/amit-…</div>
<div class="t" style="left:502px;top:218px;">jpg<br>Image</div>
<div class="t" style="left:642px;top:226px;">5.35 MB</div>
<div class="t" style="left:742px;top:218px;">3840<br>5760</div>
<div class="t" style="left:852px;width:100px;text-align:right;top:218px;">1355 mm<br>2032 mm</div>
<div class="hl" style="left:0;top:259px;width:984px"></div>
<svg class="a" style="left:42px;top:273.0px" width="40" height="27" viewBox="0 0 40 27"><rect width="40" height="27" fill="#d80c18"/><rect x="20" width="20" height="27" fill="#c80a14" opacity="0.5"/><g stroke="#f8e8e8" stroke-width="2.2" fill="none" stroke-linecap="round"><path d="M10 8 Q15 11 20 8 M23 8 Q28 11 33 8 M2 20 Q7 23 12 20 M16 20 Q21 23 26 20 M30 20 Q35 23 39 20"/></g><g fill="#f8e8e8"><circle cx="7" cy="8" r="1.2"/><circle cx="21.5" cy="8" r="1.2"/><circle cx="35" cy="8" r="1.2"/><circle cx="1" cy="22" r="1.2"/><circle cx="14" cy="22" r="1.2"/><circle cx="28" cy="22" r="1.2"/></g></svg>
<div class="t" style="left:142px;top:270px;">amr-serag-7GLsZZ0qBIk-unsplash.jpg<br>/Asset-Data/Demo/Images/1-apollon-Demo-Images/amr-…</div>
<div class="t" style="left:502px;top:270px;">jpg<br>Image</div>
<div class="t" style="left:642px;top:278px;">2.13 MB</div>
<div class="t" style="left:742px;top:270px;">4000<br>6000</div>
<div class="t" style="left:852px;width:100px;text-align:right;top:270px;">1411 mm<br>2117 mm</div>
<div class="hl" style="left:0;top:311px;width:984px"></div>
<svg class="a" style="left:42px;top:318.0px" width="27" height="41" viewBox="0 0 27 41"><rect width="27" height="41" fill="#c07aa8"/><path d="M6 2 Q14 -2 22 4 L23 20 L5 20z" fill="#e2ccaa"/><ellipse cx="14" cy="12" rx="6" ry="7" fill="#e8c4b4"/><path d="M2 41 L2 26 Q8 18 14 19 Q21 18 26 26 L27 41z" fill="#181212"/><path d="M2 24 l5 2 M22 26 l4 -2" stroke="#e8c8c8" stroke-width="2"/></svg>
<div class="t" style="left:142px;top:322px;">anastasiya-gepp-2036643.jpg<br>/Asset-Data/Demo/Images/1-apollon-Demo-Images/anas…</div>
<div class="t" style="left:502px;top:322px;">jpg<br>Image</div>
<div class="t" style="left:642px;top:330px;">3.34 MB</div>
<div class="t" style="left:742px;top:322px;">5844<br>3896</div>
<div class="t" style="left:852px;width:100px;text-align:right;top:322px;">2062 mm<br>1374 mm</div>
<div class="hl" style="left:0;top:363px;width:984px"></div>
<svg class="a" style="left:42px;top:370.0px" width="27" height="41" viewBox="0 0 27 41"><rect width="27" height="41" fill="#d4606e"/><rect x="18" width="9" height="41" fill="#c84a5c" opacity="0.6"/><path d="M10 4 Q14 1 17 4 L20 22 L16 18 L11 14z" fill="#3a2020"/><ellipse cx="13" cy="9" rx="3" ry="4" fill="#e8c0b0"/><path d="M8 17 L20 16 L19 41 L10 41z" fill="#f2e4e6"/><rect x="10" y="21" width="9" height="3" fill="#c05068"/></svg>
<div class="t" style="left:142px;top:374px;">anastasiya-gepp-2065194.jpg<br>/Asset-Data/Demo/Images/1-apollon-Demo-Images/anas…</div>
<div class="t" style="left:502px;top:374px;">jpg<br>Image</div>
<div class="t" style="left:642px;top:382px;">764.40 …</div>
<div class="t" style="left:742px;top:374px;">4290<br>2860</div>
<div class="t" style="left:852px;width:100px;text-align:right;top:374px;">1513 mm<br>1009 mm</div>
<div class="hl" style="left:0;top:415px;width:984px"></div>
<svg class="a" style="left:42px;top:422.0px" width="27" height="41" viewBox="0 0 27 41"><rect width="27" height="41" fill="#e4b01c"/><path d="M13 3 Q17 2 19 6 L20 24 L17 22 L15 8z" fill="#3a2a20"/><ellipse cx="15" cy="7" rx="2.5" ry="3" fill="#d8a890"/><path d="M11 13 L19 12 L18 26 L10 26z" fill="#f2eae4"/><path d="M10 26 L18 26 L17 41 L12 41z" fill="#a8e2d4"/><path d="M10 20 L5 32" stroke="#d8a890" stroke-width="1.5"/></svg>
<div class="t" style="left:142px;top:426px;">anastasiya-gepp-206520.jpg<br>/Asset-Data/Demo/Images/1-apollon-Demo-Images/anas…</div>
<div class="t" style="left:502px;top:426px;">jpg<br>Image</div>
<div class="t" style="left:642px;top:434px;">896.49 …</div>
<div class="t" style="left:742px;top:426px;">4815<br>3210</div>
<div class="t" style="left:852px;width:100px;text-align:right;top:426px;">1699 mm<br>1132 mm</div>
<div class="hl" style="left:0;top:467px;width:984px"></div>
<div class="a" style="left:0;top:467px;width:984px;height:52px;background:#cdecf8"></div>
<svg class="a" style="left:42px;top:474.0px" width="27" height="41" viewBox="0 0 27 41"><rect width="27" height="41" fill="#e0b030"/><path d="M3 12 Q5 1 15 1 Q24 2 23 18 L20 22 L19 10 Q12 6 6 12z" fill="#4a3026"/><path d="M5 12 Q12 6 19 10 Q21 22 13 26 Q6 26 5 18z" fill="#e8c0a8"/><ellipse cx="10" cy="22" rx="3" ry="1.4" fill="#c85a80"/><path d="M6 28 Q14 25 22 22 L27 27 L27 41 L0 41 L2 34z" fill="#eeeae2"/></svg>
<div class="t" style="left:142px;top:478px;color:#06a7e8;">anastasiya-gepp-2065201.jpg<br>/Asset-Data/Demo/Images/1-apollon-Demo-Images/anas…</div>
<div class="t" style="left:502px;top:478px;color:#06a7e8;">jpg<br>Image</div>
<div class="t" style="left:642px;top:486px;color:#06a7e8;">1.70 MB</div>
<div class="t" style="left:742px;top:478px;color:#06a7e8;">5120<br>3413</div>
<div class="t" style="left:852px;width:100px;text-align:right;top:478px;color:#06a7e8;">1806 mm<br>1204 mm</div>
<div class="hl" style="left:0;top:519px;width:984px"></div>
<svg class="a" style="left:42px;top:526.5px" width="30" height="40" viewBox="0 0 30 40"><rect width="30" height="40" fill="#828487"/><path d="M9 4 Q15 1 19 5 L20 16 L12 20 L8 14z" fill="#2a2022"/><ellipse cx="15" cy="9" rx="3" ry="4" fill="#e0c8c0"/><path d="M11 15 L20 14 L22 28 L21 40 L13 40 L12 28z" fill="#e2d6cc"/><path d="M20 3 L24 10" stroke="#d8c8c0" stroke-width="2"/><rect x="20" y="26" width="4" height="14" fill="#3a3434"/></svg>
<div class="t" style="left:142px;top:530px;">anastasiya-gepp-4235393.jpg<br>/Asset-Data/Demo/Images/1-apollon-Demo-Images/anas…</div>
<div class="t" style="left:502px;top:530px;">jpg<br>Image</div>
<div class="t" style="left:642px;top:538px;">1.83 MB</div>
<div class="t" style="left:742px;top:530px;">5547<br>4160</div>
<div class="t" style="left:852px;width:100px;text-align:right;top:530px;">1957 mm<br>1468 mm</div>
<div class="hl" style="left:0;top:571px;width:984px"></div>
<svg class="a" style="left:42px;top:578.0px" width="27" height="41" viewBox="0 0 27 41"><rect width="27" height="41" fill="#dcb49a"/><path d="M4 8 Q8 0 16 2 Q22 6 19 16 L14 14 L8 16 Q4 14 4 8z" fill="#3e2a24"/><ellipse cx="12" cy="9" rx="3.5" ry="4" fill="#e8c8b4"/><path d="M8 16 L18 16 L19 30 L8 30z" fill="#f0ece8"/><path d="M4 30 L24 30 L25 38 L6 38z" fill="#eadcd2"/><ellipse cx="8" cy="32" rx="4" ry="2.5" fill="#5a4a40"/></svg>
<div class="t" style="left:142px;top:582px;">anastasiya-gepp-4382488.jpg<br>/Asset-Data/Demo/Images/1-apollon-Demo-Images/anas…</div>
<div class="t" style="left:502px;top:582px;">jpg<br>Image</div>
<div class="t" style="left:642px;top:590px;">1.29 MB</div>
<div class="t" style="left:742px;top:582px;">5563<br>3709</div>
<div class="t" style="left:852px;width:100px;text-align:right;top:582px;">1963 mm<br>1308 mm</div>
<div class="hl" style="left:0;top:623px;width:984px"></div>
<svg class="a" style="left:42px;top:637.0px" width="40" height="27" viewBox="0 0 40 27"><rect width="40" height="27" fill="#4a3e34"/><rect width="40" height="6" fill="#9a8a78"/><rect x="15" y="0" width="10" height="5" fill="#b0602a"/><g fill="#8a9aa8"><ellipse cx="12" cy="14" rx="4" ry="3"/><ellipse cx="20" cy="15" rx="3" ry="3"/><ellipse cx="30" cy="12" rx="4" ry="4"/></g><g fill="#1c1a1a"><rect x="0" y="8" width="6" height="19"/><ellipse cx="14" cy="13" rx="2" ry="2"/><ellipse cx="20" cy="14" rx="2" ry="2"/><rect x="18" y="20" width="8" height="7"/></g><rect x="30" y="18" width="10" height="9" fill="#6a5a4a"/></svg>
<div class="t" style="left:142px;top:634px;">annie-spratt-QckxruozjRg-unsplash.jpg<br>/Asset-Data/Demo/Images/1-apollon-Demo-Images/anni…</div>
<div class="t" style="left:502px;top:634px;">jpg<br>Image</div>
<div class="t" style="left:642px;top:642px;">8.72 MB</div>
<div class="t" style="left:742px;top:634px;">5304<br>7952</div>
<div class="t" style="left:852px;width:100px;text-align:right;top:634px;">1871 mm<br>2805 mm</div>
<div class="hl" style="left:0;top:675px;width:984px"></div>
<svg class="a" style="left:42px;top:689.0px" width="40" height="27" viewBox="0 0 40 27"><rect width="40" height="27" fill="#c4dcee"/><rect x="22" width="18" height="27" fill="#c8e4d0" opacity="0.5"/><rect y="20" width="40" height="7" fill="#8a9a80"/></svg>
<div class="t" style="left:142px;top:686px;">antonino-visalli-RNiBLy7aHck-unsplash.jpg<br>/Asset-Data/Demo/Images/1-apollon-Demo-Images/anto…</div>
<div class="t" style="left:502px;top:686px;">jpg<br>Image</div>
<div class="t" style="left:642px;top:694px;">1.04 MB</div>
<div class="t" style="left:742px;top:686px;">3284<br>4926</div>
<div class="t" style="left:852px;width:100px;text-align:right;top:686px;">1159 mm<br>1738 mm</div>
<div class="hl" style="left:0;top:727px;width:984px"></div></div>
<div class="a" style="left:984px;top:170px;width:17px;height:699px;background:#f1f1f1"></div>
<div class="a" style="left:986px;top:187px;width:13px;height:223px;background:#c1c1c1"></div>
<svg class="a" style="left:989px;top:176px" width="7" height="5" viewBox="0 0 7 5"><path d="M0 4.5 L3.5 0.5 L7 4.5z" fill="#a3a3a3"/></svg>
<svg class="a" style="left:989px;top:858px" width="7" height="5" viewBox="0 0 7 5"><path d="M0 0.5 L3.5 4.5 L7 0.5z" fill="#505050"/></svg>
<div class="a" style="left:0;top:869px;width:984px;height:17px;background:#f1f1f1"></div>
<div class="a" style="left:17px;top:871px;width:339px;height:13px;background:#c1c1c1"></div>
<svg class="a" style="left:6px;top:874px" width="5" height="7" viewBox="0 0 5 7"><path d="M4.5 0 L0.5 3.5 L4.5 7z" fill="#a3a3a3"/></svg>
<svg class="a" style="left:974px;top:874px" width="5" height="7" viewBox="0 0 5 7"><path d="M0.5 0 L4.5 3.5 L0.5 7z" fill="#505050"/></svg>
<div class="a" style="left:984px;top:869px;width:17px;height:17px;background:#dcdcdc"></div>
<div class="a red" style="left:577px;top:445px">(4)</div>
</div>
<div class="vl" style="left:1316px;top:0;height:886px"></div>
<!-- PANEL 3 -->
<div id="p3" class="a" style="left:1317px;top:0;width:594px;height:886px">
<svg class="a" style="left:22px;top:12px" width="8" height="12" viewBox="0 0 8 12"><path d="M7.2 0.7999999999999999 L0.7999999999999999 6.0 L7.2 11.200000000000001" fill="none" stroke="#777" stroke-width="1.4"/></svg>
<svg class="a" style="left:76px;top:10px" width="16" height="16" viewBox="0 0 16 16"><circle cx="8" cy="8" r="8" fill="#06a7e8"/><circle cx="8" cy="4.6" r="1.3" fill="#fff"/><path d="M6.3 7h2.6v4.6h1v1.2H6.3v-1.2h1V8.2h-1z" fill="#fff"/></svg>
<div class="t" style="left:101px;top:10px;color:#06a7e8">Detail view</div>
<svg class="a" style="left:182px;top:9px" width="13" height="18" viewBox="0 0 13 18"><path d="M2.2 1.6 H8.6 L12 5 V14.9 A1.3 1.3 0 0 1 10.7 16.2 H2.2 A1.3 1.3 0 0 1 0.9 14.9 V2.9 A1.3 1.3 0 0 1 2.2 1.6z" fill="none" stroke="#3c3c3c" stroke-width="1.3"/><path d="M8.2 1.8 V5.4 H11.8z" fill="#3c3c3c"/><circle cx="4.1" cy="9.3" r="0.95" fill="#3c3c3c"/><path d="M2.4 14 L4.3 11.8 L5.1 12.5 L6.7 10.4 L9 14z" fill="#3c3c3c"/></svg>
<div class="t" style="left:203px;top:10px">IPTC &amp; EXIF</div>
<svg class="a" style="left:288px;top:4px" width="25" height="28" viewBox="1605 4 25 28"><path d="M1625.5 18.6 L1618.9 25 Q1615.6 27.6 1613.1 24.9 Q1610.8 22 1613.5 19 L1620.6 11.6 Q1623.4 9 1625.4 11.3 Q1627.2 13.6 1624.7 16.1 L1618.3 22.4 Q1617 23.6 1616 22.6 Q1615.2 21.5 1616.5 20.2 L1621.5 15" fill="none" stroke="#3c3c3c" stroke-width="1.35" stroke-linecap="round"/></svg>
<div class="t" style="left:317px;top:10px">Custom Fields</div>
<svg class="a" style="left:418px;top:11px" width="14" height="14" viewBox="0 0 512 512" fill="#3c3c3c"><path d="M0 252.118V48C0 21.49 21.49 0 48 0h204.118a48 48 0 0 1 33.941 14.059l211.882 211.882c18.745 18.745 18.745 49.137 0 67.882L293.823 497.941c-18.745 18.745-49.137 18.745-67.882 0L14.059 286.059A48 48 0 0 1 0 252.118zM112 64c-26.51 0-48 21.49-48 48s21.49 48 48 48 48-21.49 48-48-21.49-48-48-48z"/></svg>
<div class="t" style="left:440px;top:10px">Keywords &amp; Taggi…</div>
<svg class="a" style="left:570px;top:13px" width="8" height="11" viewBox="0 0 8 11"><path d="M0.9 0.9 L7.1000000000000005 5.5 L0.9 10.1" fill="none" stroke="#3c3c3c" stroke-width="1.6"/></svg>
<div class="a gray" style="left:0;top:38px;width:594px;height:40px"></div>
<svg class="a" style="left:18px;top:51px" width="14" height="14" viewBox="0 0 14 14"><path d="M0 4.3H4.1V0 M9.9 0V4.3H14 M14 9.7H9.9V14 M4.1 14V9.7H0" fill="none" stroke="#3c3c3c" stroke-width="1.7"/></svg>
<div class="t" style="left:41px;top:50px">Open coarse preview</div>
<svg class="a" style="left:181px;top:51px" width="15" height="14" viewBox="0 0 15 14"><path d="M0.7 4.9V0.7H4.9 M9.8 0.7H14.1V4.9 M14.1 9.1V13.3H9.8 M4.9 13.3H0.7V9.1" fill="none" stroke="#3c3c3c" stroke-width="1.4"/></svg>
<div class="t" style="left:205px;top:50px">Open original preview</div>
<svg class="a" style="left:349px;top:55px" width="14" height="6" viewBox="0 0 14 6"><circle cx="2" cy="3" r="2" fill="#3c3c3c"/><circle cx="7" cy="3" r="2" fill="#3c3c3c"/><circle cx="12" cy="3" r="2" fill="#3c3c3c"/></svg>
<div class="a" style="left:427px;top:43px;width:80px;height:30px;background:#9b9b9b;border-radius:3px"></div>
<svg class="a" style="left:436px;top:50px" width="17" height="17" viewBox="0 0 17 17"><circle cx="8.5" cy="8.5" r="8.3" fill="#fff"/><path d="M6.2 6.2 L10.8 10.8 M10.8 6.2 L6.2 10.8" stroke="#9b9b9b" stroke-width="1.1"/></svg>
<div class="t" style="left:460px;top:50px;color:#fff">Cancel</div>
<div class="a" style="left:515px;top:43px;width:69px;height:30px;background:#13b453;border-radius:3px"></div>
<svg class="a" style="left:524px;top:52px" width="16" height="12" viewBox="0 0 16 12"><path d="M1.2 6 L5.6 10.2 L14.8 1.2" fill="none" stroke="#fff" stroke-width="2.4"/></svg>
<div class="t" style="left:548px;top:50px;color:#fff">Save</div>
<div class="hl" style="left:0;top:117px;width:594px"></div>
<div class="a" style="left:0;top:118px;width:583px;height:769px;overflow:hidden"><div class="t b" style="left:16px;top:10px">File overview</div>
<svg class="a" style="left:554px;top:14px" width="12" height="7" viewBox="0 0 12 7"><path d="M0.85 6.15 L6.0 0.85 L11.15 6.15" fill="none" stroke="#3c3c3c" stroke-width="1.5"/></svg>
<div class="a" style="left:192px;top:36px;width:201px;height:201px;border:1px solid #ececec;background:#fff"></div>
<svg class="a" style="left:225px;top:37px" width="133" height="200" viewBox="0 0 133 200">
<defs>
<filter id="pb" x="-5%" y="-5%" width="110%" height="110%"><feGaussianBlur stdDeviation="0.9"/></filter>
<linearGradient id="bgY" x1="0" y1="0" x2="0.3" y2="1"><stop offset="0" stop-color="#e3b42e"/><stop offset="1" stop-color="#d9a822"/></linearGradient>
<radialGradient id="hairG" cx="0.45" cy="0.25" r="0.7"><stop offset="0" stop-color="#6a4a3c"/><stop offset="0.6" stop-color="#45302a"/><stop offset="1" stop-color="#34241e"/></radialGradient>
<radialGradient id="skinG" cx="0.55" cy="0.45" r="0.6"><stop offset="0" stop-color="#f2d2c2"/><stop offset="0.7" stop-color="#e6bca6"/><stop offset="1" stop-color="#d4a48c"/></radialGradient>
<linearGradient id="blG" x1="0" y1="0" x2="1" y2="1"><stop offset="0" stop-color="#f6f3ee"/><stop offset="1" stop-color="#e8e0d8"/></linearGradient>
</defs>
<rect width="133" height="200" fill="url(#bgY)"/>
<g filter="url(#pb)">
<path d="M14 66 Q11 25 40 9 Q65 0 88 8 Q110 22 112 60 Q115 90 110 118 L100 122 L97 64 Q88 40 56 36 Q30 38 18 64z" fill="url(#hairG)"/>
<path d="M62 118 Q88 106 101 94 L108 138 L64 144z" fill="#d9ab94"/>
<path d="M17 63 Q28 38 56 35 Q88 38 97 62 Q102 82 96 100 Q86 122 60 128 Q44 131 36 121 Q20 102 17 80z" fill="url(#skinG)"/>
<path d="M94 58 Q106 57 106 75 Q104 93 93 92z" fill="#dcae98"/>
<path d="M20 62 Q15 100 30 142" stroke="#4a3228" stroke-width="1.4" fill="none"/>
<path d="M19 67 Q29 61 39 65 M47 59 Q60 53 75 57" stroke="#5e4032" stroke-width="2" fill="none"/>
<ellipse cx="28" cy="74" rx="6.5" ry="2.8" fill="#3a3036"/>
<ellipse cx="57" cy="67" rx="7.5" ry="3" fill="#3a3036"/>
<path d="M48 71 Q58 73 67 64 M21 78 Q29 79 35 74" stroke="#2f8088" stroke-width="1.4" fill="none"/>
<path d="M41 76 Q36 92 45 97" stroke="#c49480" stroke-width="2.2" fill="none"/>
<path d="M58 82 Q72 80 80 92" stroke="#f0c8b8" stroke-width="5" fill="none" opacity="0.6"/>
<ellipse cx="46" cy="107" rx="10.5" ry="4.3" fill="#c9587c"/>
<rect x="94" y="79" width="3" height="8" fill="#f6f2ec"/>
<path d="M34 136 Q46 126 72 121 Q98 112 109 103 Q124 102 121 120 Q119 133 133 146 L133 200 L0 200 Q5 178 19 158 Q27 145 34 136z" fill="url(#blG)"/>
<path d="M42 134 Q50 124 60 128 Q70 120 80 124 Q92 114 100 116 Q110 106 118 112" stroke="#ffffff" stroke-width="4" fill="none"/>
<path d="M48 152 Q60 142 78 140 M82 160 Q102 148 126 166 M28 182 Q48 170 70 178 M88 190 Q110 178 132 192 M96 140 Q108 150 120 146" stroke="#d8cbbf" stroke-width="2.5" fill="none" opacity="0.75"/>
<path d="M70 138 Q73 168 62 200" stroke="#e2d6ca" stroke-width="2" fill="none"/>
</g>
</svg>
<div class="a red" style="left:445.5px;top:58px">(5)</div>
<div class="t b" style="left:16px;top:255px">Caption</div>
<div class="a" style="left:222px;top:249px;width:345px;height:28px;border:1.3px solid #3c3c3c;border-radius:1px"></div>
<div class="t" style="left:230px;top:255px;color:#cfcfcf">no input yet</div>
<div class="t b" style="left:16px;top:295px">Rating</div>
<svg class="a" style="left:222.5px;top:290px" width="18" height="17" viewBox="0 0 576 512" fill="#e6d000"><path d="M259.3 17.8L194 150.2 47.9 171.5c-26.2 3.8-36.7 36.1-17.7 54.6l105.7 103-25 145.5c-4.5 26.3 23.2 46 46.4 33.7L288 439.6l130.7 68.7c23.2 12.2 50.9-7.4 46.4-33.7l-25-145.5 105.7-103c19-18.5 8.5-50.8-17.7-54.6L382 150.2 316.7 17.8c-11.7-23.6-45.6-23.9-57.4 0z"/></svg>
<svg class="a" style="left:242.8px;top:290px" width="18" height="17" viewBox="0 0 576 512" fill="#e6d000"><path d="M259.3 17.8L194 150.2 47.9 171.5c-26.2 3.8-36.7 36.1-17.7 54.6l105.7 103-25 145.5c-4.5 26.3 23.2 46 46.4 33.7L288 439.6l130.7 68.7c23.2 12.2 50.9-7.4 46.4-33.7l-25-145.5 105.7-103c19-18.5 8.5-50.8-17.7-54.6L382 150.2 316.7 17.8c-11.7-23.6-45.6-23.9-57.4 0z"/></svg>
<svg class="a" style="left:263.1px;top:290px" width="18" height="17" viewBox="0 0 576 512" fill="#e6d000"><path d="M259.3 17.8L194 150.2 47.9 171.5c-26.2 3.8-36.7 36.1-17.7 54.6l105.7 103-25 145.5c-4.5 26.3 23.2 46 46.4 33.7L288 439.6l130.7 68.7c23.2 12.2 50.9-7.4 46.4-33.7l-25-145.5 105.7-103c19-18.5 8.5-50.8-17.7-54.6L382 150.2 316.7 17.8c-11.7-23.6-45.6-23.9-57.4 0z"/></svg>
<svg class="a" style="left:283.4px;top:290px" width="18" height="17" viewBox="0 0 576 512" fill="#9a9a9a"><path d="M259.3 17.8L194 150.2 47.9 171.5c-26.2 3.8-36.7 36.1-17.7 54.6l105.7 103-25 145.5c-4.5 26.3 23.2 46 46.4 33.7L288 439.6l130.7 68.7c23.2 12.2 50.9-7.4 46.4-33.7l-25-145.5 105.7-103c19-18.5 8.5-50.8-17.7-54.6L382 150.2 316.7 17.8c-11.7-23.6-45.6-23.9-57.4 0z"/></svg>
<svg class="a" style="left:303.7px;top:290px" width="18" height="17" viewBox="0 0 576 512" fill="#9a9a9a"><path d="M259.3 17.8L194 150.2 47.9 171.5c-26.2 3.8-36.7 36.1-17.7 54.6l105.7 103-25 145.5c-4.5 26.3 23.2 46 46.4 33.7L288 439.6l130.7 68.7c23.2 12.2 50.9-7.4 46.4-33.7l-25-145.5 105.7-103c19-18.5 8.5-50.8-17.7-54.6L382 150.2 316.7 17.8c-11.7-23.6-45.6-23.9-57.4 0z"/></svg>
<div class="t b" style="left:16px;top:330px">Filename</div>
<div class="t" style="left:222px;top:330px;width:345px;overflow:hidden">anastasiya-gepp-2065201.jpg</div>
<div class="t b" style="left:16px;top:365px">Technical ID</div>
<div class="t" style="left:222px;top:365px;width:345px;overflow:hidden">F52BDF86-4095-4EA7-BB23-7537EDE5D310</div>
<div class="t b" style="left:16px;top:400px">File path</div>
<div class="t" style="left:222px;top:400px;width:345px;overflow:hidden">/Asset-Data/Demo/Images/1-apollon-Demo-Images/anastasiya-gepp-2065201.jpg</div>
<div class="t b" style="left:16px;top:435px">File suffix</div>
<div class="t" style="left:222px;top:435px;width:345px;overflow:hidden">jpg</div>
<div class="t b" style="left:16px;top:470px">File type</div>
<div class="t" style="left:222px;top:470px;width:345px;overflow:hidden">Image</div>
<div class="t b" style="left:16px;top:505px">File size</div>
<div class="t" style="left:222px;top:505px;width:345px;overflow:hidden">2 MB</div>
<div class="t b" style="left:16px;top:540px">Creation date</div>
<div class="t" style="left:222px;top:540px;width:345px;overflow:hidden">2 Jan 2025, 10:09:51</div>
<div class="t b" style="left:16px;top:575px">Modification date</div>
<div class="t" style="left:222px;top:575px;width:345px;overflow:hidden">2 Jan 2025, 10:09:49</div>
<div class="t b" style="left:16px;top:610px">Release status</div>
<div class="a" style="left:222px;top:604px;width:345px;height:28px;border:1.3px solid #3c3c3c;border-radius:3px"></div>
<div class="t" style="left:232px;top:610px">Nothing selected</div>
<svg class="a" style="left:547px;top:615px" width="10" height="6" viewBox="0 0 10 6"><path d="M0.75 0.75 L5.0 5.25 L9.25 0.75" fill="none" stroke="#555" stroke-width="1.3"/></svg>
<div class="t b" style="left:16px;top:650px;color:#4a4a4a">Comment</div>
<div class="a" style="left:16px;top:667px;width:551px;height:32px;border:1.3px solid #3c3c3c"></div>
<div class="t" style="left:25px;top:675px;color:#cfcfcf">no input yet</div>
<div class="hl" style="left:0;top:710px;width:583px"></div>
<div class="t b" style="left:16px;top:721px">Picture properties</div>
<svg class="a" style="left:554px;top:726px" width="12" height="7" viewBox="0 0 12 7"><path d="M0.85 0.85 L6.0 6.15 L11.15 0.85" fill="none" stroke="#3c3c3c" stroke-width="1.5"/></svg>
<div class="hl" style="left:0;top:747px;width:583px"></div>
<div class="t b" style="left:16px;top:758px">Usages</div>
<svg class="a" style="left:554px;top:763px" width="12" height="7" viewBox="0 0 12 7"><path d="M0.85 0.85 L6.0 6.15 L11.15 0.85" fill="none" stroke="#3c3c3c" stroke-width="1.5"/></svg></div>
<div class="a" style="left:583px;top:118px;width:11px;height:769px;background:#f1f1f1"></div>
<div class="a" style="left:585px;top:135px;width:9px;height:720px;background:#c1c1c1"></div>
<svg class="a" style="left:587px;top:122px" width="7" height="5" viewBox="0 0 7 5"><path d="M0 4.5 L3.5 0.5 L7 4.5z" fill="#a3a3a3"/></svg>
<svg class="a" style="left:587px;top:876px" width="7" height="5" viewBox="0 0 7 5"><path d="M0 0.5 L3.5 4.5 L7 0.5z" fill="#505050"/></svg>
</div>
<!-- BOTTOM BAR -->
<div id="bb" class="a gray" style="left:63px;top:886px;width:1848px;height:38px;border-top:1px solid #d8d8d8">
<svg class="a" style="left:12px;top:12px" width="17" height="15" viewBox="0 0 17 15"><path d="M4 1h11.5a1 1 0 0 1 1 1v8a1 1 0 0 1-1 1H14V4H4z" fill="none" stroke="#3c3c3c" stroke-width="1.3"/><rect x="0.8" y="4.5" width="12.5" height="9.7" rx="0.8" fill="none" stroke="#3c3c3c" stroke-width="1.6"/><path d="M2 13 L5.5 9 L7.5 11 L10 8 L12.5 13z" fill="#3c3c3c"/><circle cx="4" cy="7.5" r="1.1" fill="#3c3c3c"/></svg>
<svg class="a" style="left:41.5px;top:14px" width="8" height="12" viewBox="0 0 8 12"><path d="M1.0 1.0 L7.0 6.0 L1.0 11.0" fill="none" stroke="#3c3c3c" stroke-width="1.8"/></svg>
<svg class="a" style="left:61px;top:16px" width="14" height="5" viewBox="0 0 14 5"><circle cx="2.2" cy="2.5" r="2" fill="#3c3c3c"/><circle cx="7" cy="2.5" r="2" fill="#3c3c3c"/><circle cx="11.8" cy="2.5" r="2" fill="#3c3c3c"/></svg>
<svg class="a" style="left:88px;top:14px" width="8" height="12" viewBox="0 0 8 12"><path d="M1.0 1.0 L7.0 6.0 L1.0 11.0" fill="none" stroke="#3c3c3c" stroke-width="1.8"/></svg>
<div class="t" style="left:108px;top:12px">Asset-Data</div>
<svg class="a" style="left:181px;top:14px" width="8" height="12" viewBox="0 0 8 12"><path d="M1.0 1.0 L7.0 6.0 L1.0 11.0" fill="none" stroke="#3c3c3c" stroke-width="1.8"/></svg>
<div class="t" style="left:202px;top:12px">Demo</div>
<svg class="a" style="left:247px;top:14px" width="8" height="12" viewBox="0 0 8 12"><path d="M1.0 1.0 L7.0 6.0 L1.0 11.0" fill="none" stroke="#3c3c3c" stroke-width="1.8"/></svg>
<div class="t" style="left:268px;top:12px">Images</div>
<svg class="a" style="left:320.5px;top:14px" width="8" height="12" viewBox="0 0 8 12"><path d="M1.0 1.0 L7.0 6.0 L1.0 11.0" fill="none" stroke="#3c3c3c" stroke-width="1.8"/></svg>
<div class="t" style="left:342px;top:13px;color:#06a7e8">1-apollon-Demo-Images</div>
</div>
</body></html>
